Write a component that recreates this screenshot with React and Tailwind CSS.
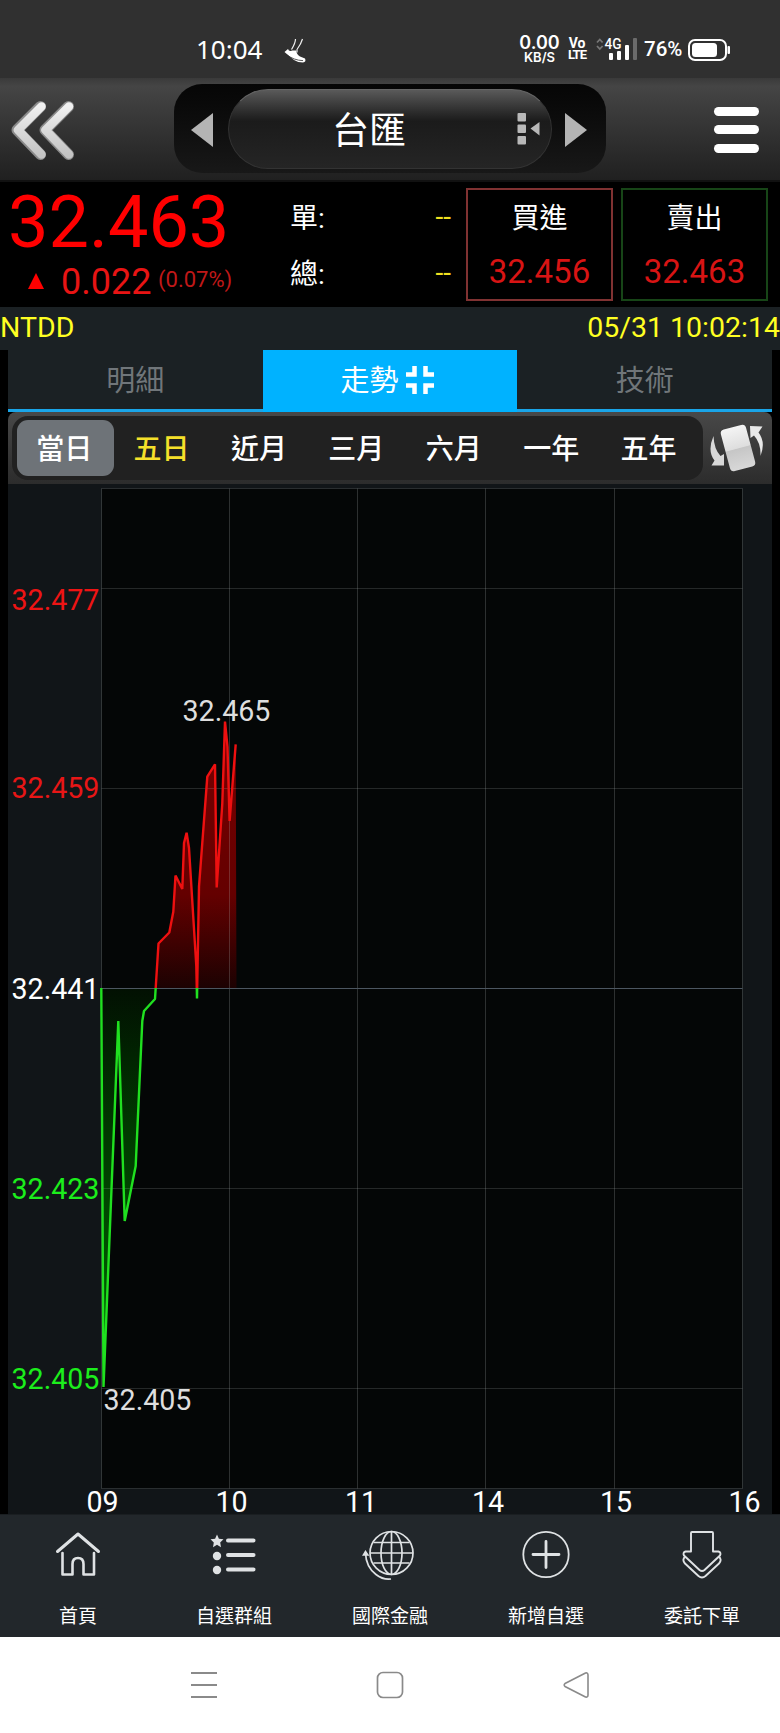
import { clsx } from "clsx";

// Tabs Configuration
const TABS = [
    { key: "detail", label: "明細" },
    { key: "trend", label: "走勢" },
    { key: "tech", label: "技術" },
];

const RANGES = ["當日", "五日", "近月", "三月", "六月", "一年", "五年"];

// Chart data, in the coordinates of the chart svg (764 x 1030)
const BASE = 504;
const X_LINES = [93.5, 221.5, 349.5, 477.5, 606.5, 734.5];
const Y_LINES = [4.5, 104.5, 304.5, 704.5, 904.5, 1004.5];
const PRICES = [
    { text: "32.477", y: 125.5, fill: "#ee1414" },
    { text: "32.459", y: 314, fill: "#e81616" },
    { text: "32.441", y: 514.5, fill: "#ffffff" },
    { text: "32.423", y: 714.5, fill: "#1cee1c" },
    { text: "32.405", y: 904.5, fill: "#1cee1c" },
];
const HOURS = [
    { text: "09", x: 94.5 },
    { text: "10", x: 223.5 },
    { text: "11", x: 353 },
    { text: "14", x: 480 },
    { text: "15", x: 608 },
    { text: "16", x: 736.5 },
];
const LINE =
    "93.3,504 95.5,903 110.3,537 116.7,737 127.7,682 134.3,537 136,527 147,515 150.5,459.5 161.3,448.5 165.3,427.7 167.5,391.5 174.3,405 176,359 178.6,348.7 181,364 188.3,482 189,514.5 191,402.7 199.3,292.7 207,280.3 208.7,403.5 214.3,319.3 217,237.5 219.5,263 221.6,337 227.7,260.3";

const StatusBar = () => (
    <div className="h-[78px] bg-[#303030] flex items-center pt-[20px] text-white">
        <span className="ml-[196px] w-[67px] font-['Noto_Sans',sans-serif] text-[26px] leading-none whitespace-nowrap">10:04</span>
        <svg className="ml-[20px] mt-[3px]" width="24" height="26" viewBox="0 0 24 26">
            <path d="M1.5 14 L5 11 Q6 14 9 12.5 L13 12.5 Q14 17 17 18.5 L22 20.5 Q23.5 24 20 24.5 Q15 24.5 11 22 Q6 18 1.5 14Z" fill="#fff" />
            <path d="M3 16.3 Q11 22.5 20 22.6" stroke="#303030" strokeWidth="0.8" fill="none" />
            <path d="M12.5 1 Q12.5 5 8.5 11.5 M19.5 1 Q18 6 14 11.5 L14 14.5" stroke="#eee" strokeWidth="1.2" fill="none" />
        </svg>
        <div className="ml-[213px] w-[39px] flex flex-col items-center font-[Inter,sans-serif] font-semibold leading-none">
            <span className="text-[18px] leading-[16px]">0.00</span>
            <span className="text-[13px] leading-[12px]">KB/S</span>
        </div>
        <div className="ml-[8px] w-[20px] flex flex-col items-center font-['Roboto',sans-serif] font-bold leading-none">
            <span className="text-[14px] leading-[12px]">Vo</span>
            <span className="text-[13px] leading-[12px] tracking-[-1px]">LTE</span>
        </div>
        <svg className="ml-[9px]" width="42" height="24" viewBox="0 0 42 24">
            <path d="M1 5.5 L3.8 2.5 L6.6 5.5 M1 9 L3.8 12 L6.6 9" stroke="#777" strokeWidth="1.8" fill="none" />
            <text x="8.5" y="12" fontSize="14" fontWeight="500" textLength="17" lengthAdjust="spacingAndGlyphs" fill="#fff" fontFamily="Roboto, sans-serif">4G</text>
            <rect x="13" y="16" width="4" height="7" rx="1" fill="#fff" />
            <rect x="21" y="14" width="4" height="9" rx="1" fill="#fff" />
            <rect x="29" y="8" width="4" height="15" rx="1" fill="#fff" />
            <rect x="37" y="1" width="4" height="22" rx="1" fill="#6b6b6b" />
        </svg>
        <span className="ml-[6px] mt-[1px] w-[39px] font-['Roboto',sans-serif] font-medium text-[20.5px] leading-none">76%</span>
        <svg className="ml-[4px] mt-[2px]" width="44" height="24" viewBox="0 0 44 24">
            <rect x="2" y="2" width="37" height="20" rx="6" stroke="#fff" strokeWidth="2" fill="none" />
            <rect x="5" y="5" width="25" height="14" rx="3.5" fill="#fff" />
            <rect x="40.5" y="8" width="2.5" height="8" rx="1" fill="#fff" />
        </svg>
    </div>
);

const TitleBar = () => (
    <div className="h-[104px] bg-linear-to-b from-[#3a3a3a] via-[#454545] via-8% to-[#202020] flex items-center border-b-2 border-[#111]">
        <svg className="ml-[10px] mt-[2px]" width="66" height="64" viewBox="0 0 66 64">
            <defs>
                <linearGradient id="chev" x1="0" y1="0" x2="0" y2="1">
                    <stop offset="0" stopColor="#f0f0f0" />
                    <stop offset="1" stopColor="#c4c4c4" />
                </linearGradient>
            </defs>
            <path d="M30.5 8.5 L7 32 L30.5 56.5 M58.5 8.5 L35 32 L58.5 56.5" stroke="#8a8a8a" strokeWidth="11" strokeLinecap="round" strokeLinejoin="round" fill="none" />
            <path d="M31.5 8.5 L8 32 L31.5 56.5 M59 8.5 L35.5 32 L59 56.5" stroke="url(#chev)" strokeWidth="8.5" strokeLinecap="round" strokeLinejoin="round" fill="none" />
        </svg>
        <div className="ml-[98px] mb-[2px] w-[432px] h-[89px] rounded-[28px] bg-linear-to-b from-[#060606] to-[#181818] flex items-center">
            <svg className="ml-[17px] mt-[3px]" width="22" height="34" viewBox="0 0 22 34">
                <path d="M0 17 L22 0 V34 Z" fill="#b4b4b4" />
            </svg>
            <div className="ml-[15px] mt-[2px] w-[324px] h-[80px] rounded-[40px] bg-linear-to-b from-[#5a5a5a] via-[#1b1b1b] via-40% to-[#252525] border border-[#333] border-t-[#666] flex items-center">
                <span className="ml-[103px] mt-[5px] w-[76px] text-[37px] leading-[40px] text-white whitespace-nowrap">台匯</span>
                <svg className="ml-[109px]" width="24" height="34" viewBox="0 0 24 34">
                    <rect x="0.5" y="1" width="8.5" height="8.5" rx="1" fill="#b8b8b8" />
                    <rect x="0.5" y="12.5" width="8.5" height="8.5" rx="1" fill="#b8b8b8" />
                    <rect x="0.5" y="24" width="8.5" height="8.5" rx="1" fill="#b8b8b8" />
                    <path d="M13.5 16.5 L22.5 10 V23.5 Z" fill="#b8b8b8" />
                </svg>
            </div>
            <svg className="ml-[13px] mt-[3px]" width="22" height="34" viewBox="0 0 22 34">
                <path d="M22 17 L0 0 V34 Z" fill="#b4b4b4" />
            </svg>
        </div>
        <div className="ml-[108px] mt-[1px] flex flex-col gap-[9.5px]">
            <div className="w-[45px] h-[9px] rounded-full bg-white" />
            <div className="w-[45px] h-[9px] rounded-full bg-white" />
            <div className="w-[45px] h-[9px] rounded-full bg-white" />
        </div>
    </div>
);

const QuoteBox = ({ label, price, className }) => (
    <div className={clsx("h-[113px] w-[147px] border-2 flex flex-col items-center", className)}>
        <span className="mt-[15px] text-[28px] leading-[28px] text-white">{label}</span>
        <span className="mt-[21px] text-[33px] leading-[36px] text-[#d81414]">{price}</span>
    </div>
);

const QuotePanel = () => (
    <div className="h-[125px] bg-black flex">
        <div className="w-[290px] pl-[8px] pt-[5px]">
            <div className="text-[72px] leading-[72px] text-[#ff0000]">32.463</div>
            <div className="flex items-center pl-[20px] h-[44px]">
                <svg width="16" height="16" viewBox="0 0 16 16">
                    <path d="M8 0 L16 16 H0 Z" fill="#ff0000" />
                </svg>
                <span className="ml-[17px] mt-[2px] w-[90px] text-[36px] leading-none text-[#e81414]">0.022</span>
                <span className="ml-[7px] mt-[-2px] text-[22px] leading-none text-[#c01818]">(0.07%)</span>
            </div>
        </div>
        <div className="w-[161px] pt-[23px] text-[28px] leading-[28px]">
            <div className="flex justify-between">
                <span className="text-white">單:</span>
                <span className="-mt-[2px] text-[#f0e020]">--</span>
            </div>
            <div className="flex justify-between mt-[28px]">
                <span className="text-white">總:</span>
                <span className="-mt-[2px] text-[#f0e020]">--</span>
            </div>
        </div>
        <div className="ml-[15px] mt-[6px] flex gap-[8px]">
            <QuoteBox label="買進" price="32.456" className="border-[#803232]" />
            <QuoteBox label="賣出" price="32.463" className="border-[#174517]" />
        </div>
    </div>
);

const TabBar = () => (
    <div className="mx-[8px] h-[62px] flex bg-[#1b2124] border-b-[3px] border-[#1aa5e8]">
        {TABS.map((tab) => {
            const isActive = tab.key === "trend";
            return (
                <div
                    key={tab.key}
                    className={clsx(
                        "w-1/3 flex items-center justify-center text-[29px] leading-none",
                        isActive ? "bg-[#00b2ff] text-white -mb-[3px] pb-[3px] pr-[5px]" : "text-[#70767a]"
                    )}
                >
                    <span className="mt-[3px]">{tab.label}</span>
                    {isActive && (
                        <svg className="ml-[8px]" width="28" height="28" viewBox="0 0 28 28">
                            <path d="M8.5 0 V8.5 H0 M19.5 0 V8.5 H28 M8.5 28 V19.5 H0 M19.5 28 V19.5 H28" stroke="#fff" strokeWidth="4.5" fill="none" />
                        </svg>
                    )}
                </div>
            );
        })}
    </div>
);

const RangeBar = () => (
    <div className="mx-[8px] h-[72px] rounded-t-[8px] bg-linear-to-b from-[#484848] to-[#2c2c2c] flex items-center">
        <div className="ml-[4px] w-[691px] h-[64px] rounded-[16px] bg-[#212121] flex items-center pl-[4.5px]">
            {RANGES.map((label, i) => (
                <div
                    key={label}
                    className={clsx(
                        "h-[56px] w-[97.4px] rounded-[11px] flex items-center justify-center text-[28px] leading-none font-medium pt-[3px] pr-[2px]",
                        i === 0 && "bg-[#6e7378]",
                        i === 1 ? "text-[#f5e02a]" : "text-white"
                    )}
                >
                    {label}
                </div>
            ))}
        </div>
        <svg className="ml-[7px]" width="54" height="52" viewBox="0 0 54 52">
            <defs>
                <linearGradient id="card" x1="0" y1="0" x2="0" y2="1">
                    <stop offset="0" stopColor="#f4f4f4" />
                    <stop offset="0.5" stopColor="#dedede" />
                    <stop offset="0.52" stopColor="#c6c6c6" />
                    <stop offset="1" stopColor="#d8d8d8" />
                </linearGradient>
            </defs>
            <rect x="15" y="4.5" width="26" height="43" rx="4" fill="url(#card)" transform="rotate(-15 28 26)" />
            <path d="M3.5 14 Q-3 29 4.5 38.5 L1.5 43.5 L14 43.5 L14 32 L10.5 34 Q4 27 3.5 14Z" fill="#d8d8d8" />
            <path d="M50.5 34 Q56 20 48.5 10.5 L52.5 4.5 L40 4 L40.5 16 L44 13.5 Q51 21 50.5 34Z" fill="#e8e8e8" />
        </svg>
    </div>
);

const TrendChart = () => (
    <svg className="mx-[8px] block overflow-visible" width="764" height="1030" viewBox="0 0 764 1030" fontFamily="Roboto, sans-serif" fontSize="28.6">
        <defs>
            <linearGradient id="redFill" gradientUnits="userSpaceOnUse" x1="0" y1="237" x2="0" y2={BASE}>
                <stop offset="0" stopColor="#780000" />
                <stop offset="0.65" stopColor="#640000" />
                <stop offset="1" stopColor="#1c0202" />
            </linearGradient>
            <linearGradient id="greenFill" gradientUnits="userSpaceOnUse" x1="0" y1={BASE} x2="0" y2="904">
                <stop offset="0" stopColor="#021002" />
                <stop offset="0.35" stopColor="#003800" />
                <stop offset="1" stopColor="#006800" />
            </linearGradient>
            <clipPath id="above">
                <rect x="0" y="0" width="764" height={BASE} />
            </clipPath>
            <clipPath id="below">
                <rect x="0" y={BASE} width="764" height="526" />
            </clipPath>
        </defs>
        <rect width="764" height="1030" fill="#111518" />
        <rect x="93.5" y="4.5" width="641" height="1000" fill="#040606" />

        {/* Area */}
        <polygon points={`93.3,504 ${LINE} 228.5,504`} fill="url(#redFill)" clipPath="url(#above)" />
        <polygon points={`93.3,504 ${LINE} 228.5,504`} fill="url(#greenFill)" clipPath="url(#below)" />

        {/* Grid */}
        {X_LINES.map((x) => (
            <path key={x} d={`M${x} 4.5 V1004.5`} stroke="#b4bebe" strokeOpacity="0.23" />
        ))}
        {Y_LINES.map((y) => (
            <path key={y} d={`M93.5 ${y} H734.5`} stroke="#b4bebe" strokeOpacity="0.19" />
        ))}
        <path d="M93.5 504.5 H734.5" stroke="#4c5660" />

        {/* Price line */}
        <polyline points={LINE} stroke="#ee1010" strokeWidth="2.4" strokeLinejoin="bevel" fill="none" clipPath="url(#above)" />
        <polyline points={LINE} stroke="#20e020" strokeWidth="2.4" strokeLinejoin="bevel" fill="none" clipPath="url(#below)" />

        {PRICES.map((p) => (
            <text key={p.text} x="3.5" y={p.y} fill={p.fill}>{p.text}</text>
        ))}
        <text x="174.5" y="237" fill="#dedede">32.465</text>
        <text x="95.5" y="926" fill="#dedede">32.405</text>
        {HOURS.map((h) => (
            <text key={h.text} x={h.x} y="1028" fill="#fff" textAnchor="middle">{h.text}</text>
        ))}
    </svg>
);

const HomeIcon = () => (
    <svg width="50" height="50" viewBox="0 0 50 50" stroke="#dfe2e4" fill="none" strokeLinecap="round" strokeLinejoin="round">
        <path d="M4.5 22.5 L25 5 L45.5 22.5" strokeWidth="3" />
        <path d="M9.5 24 V45.5 H19.5 V35 Q19.5 29 25 29 Q30.5 29 30.5 35 V45.5 H41 V24" strokeWidth="2.6" />
    </svg>
);

const ListIcon = () => (
    <svg className="-ml-[2px]" width="50" height="50" viewBox="0 0 50 50" fill="#dfe2e4">
        <path d="M9 5.5 L10.9 9.7 L15.5 10.2 L12.2 13.5 L13 18.2 L9 15.8 L5 18.2 L5.8 13.5 L2.5 10.2 L7.1 9.7Z" />
        <circle cx="9" cy="27" r="4.2" />
        <circle cx="9" cy="41" r="4.2" />
        <path d="M20 11.5 H45.5 M20 26 H45.5 M20 40.5 H45.5" stroke="#dfe2e4" strokeWidth="4" strokeLinecap="round" />
    </svg>
);

const GlobeIcon = () => (
    <svg className="-ml-[2px]" width="54" height="52" viewBox="0 0 54 52" stroke="#dfe2e4" fill="none" strokeWidth="1.7">
        <circle cx="29.5" cy="24" r="21.5" />
        <ellipse cx="29.5" cy="24" rx="10.5" ry="21.5" />
        <path d="M29.5 2.5 V45.5 M8 24 H51 M11.5 13.5 H47.5 M11.5 34 H47.5" />
        <path d="M3.5 24 Q4 38 14 45.5 Q21 51 29 50" />
        <path d="M1.5 26 L3.5 22.5 L5.8 26Z" fill="#dfe2e4" />
    </svg>
);

const PlusIcon = () => (
    <svg width="50" height="50" viewBox="0 0 50 50" stroke="#dfe2e4" fill="none" strokeLinecap="round">
        <circle cx="25" cy="25.5" r="22.7" strokeWidth="1.8" />
        <path d="M25 12.5 V38.5 M12 25.5 H38" strokeWidth="2.8" />
    </svg>
);

const OrderIcon = () => (
    <svg width="50" height="50" viewBox="0 0 50 50" stroke="#dfe2e4" fill="none" strokeWidth="1.9" strokeLinejoin="round">
        <path d="M15 3 H35 Q36 3 36 4 V22.5 H41.5 Q44.5 23.5 43 26.5 L27.5 41 Q25 43 22.5 41 L7 26.5 Q5.5 23.5 8.5 22.5 H14 V4 Q14 3 15 3Z" />
        <path d="M8.5 27.5 Q4.5 30.5 8 34.5 L21.5 47 Q25 50 28.5 47 L42 34.5 Q45.5 30.5 41.5 27.5" />
    </svg>
);

const NAV = [
    { label: "首頁", icon: HomeIcon },
    { label: "自選群組", icon: ListIcon },
    { label: "國際金融", icon: GlobeIcon },
    { label: "新增自選", icon: PlusIcon },
    { label: "委託下單", icon: OrderIcon },
];

const BottomNav = () => (
    <div className="h-[123px] bg-[#22272b] flex border-t border-[#1a1e21]">
        {NAV.map((item) => {
            const Icon = item.icon;
            return (
                <div key={item.label} className="flex-1 flex flex-col items-center pt-[14px]">
                    <div className="h-[52px]">
                        <Icon />
                    </div>
                    <span className="mt-[26px] text-[19px] leading-[20px] text-white whitespace-nowrap">{item.label}</span>
                </div>
            );
        })}
    </div>
);

const SystemNav = () => (
    <div className="h-[96px] bg-white flex items-center justify-between pl-[190px] pr-[190px]">
        <svg width="28" height="28" viewBox="0 0 28 28" stroke="#8a8a8a" strokeWidth="2">
            <path d="M1 2 H27 M1 14 H27 M1 26 H27" />
        </svg>
        <svg width="28" height="28" viewBox="0 0 28 28">
            <rect x="1.5" y="1.5" width="25" height="25" rx="5.5" stroke="#8a8a8a" strokeWidth="1.7" fill="none" />
        </svg>
        <svg width="28" height="28" viewBox="0 0 28 28">
            <path d="M23.5 2 Q26 1.5 26 4 V24 Q26 26.5 23.5 26 L3 15.5 Q1.5 14 3 12.5Z" stroke="#8a8a8a" strokeWidth="1.6" fill="none" strokeLinejoin="round" />
        </svg>
    </div>
);

const App = () => {
    return (
        <div className="w-[780px] h-[1733px] overflow-hidden bg-black font-['Roboto','Noto_Sans_CJK_TC',sans-serif]">
            <StatusBar />
            <TitleBar />
            <QuotePanel />

            {/* Market + Timestamp */}
            <div className="h-[43px] bg-[#1b2124] flex justify-between text-[28.5px] leading-[42px] text-[#ffff22]">
                <span>NTDD</span>
                <span>05/31 10:02:14</span>
            </div>

            <TabBar />
            <RangeBar />
            <TrendChart />
            <BottomNav />
            <SystemNav />
        </div>
    );
};

export default App;
